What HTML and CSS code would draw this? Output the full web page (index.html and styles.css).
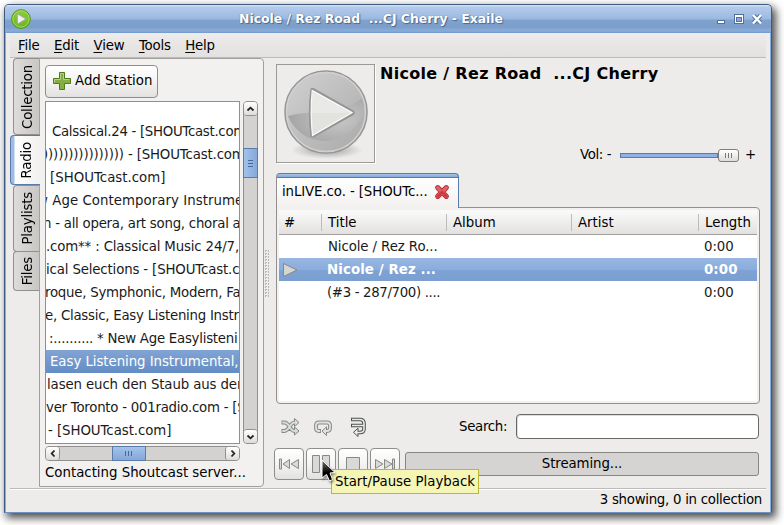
FILE: index.html
```html
<!DOCTYPE html>
<html lang="en">
<head>
<meta charset="utf-8">
<title>Exaile</title>
<link rel="stylesheet" href="styles.css">
</head>
<body>
<div class="window">
  <header class="titlebar">
    <svg class="app-icon" width="20" height="20" viewBox="0 0 20 20">
      <defs><linearGradient id="g" x1="0" y1="0" x2="0" y2="1"><stop offset="0" stop-color="#8fcf3c"/><stop offset="1" stop-color="#65b80f"/></linearGradient></defs>
      <circle cx="10" cy="10" r="9.3" fill="url(#g)" stroke="#4e8f10"/>
      <circle cx="10" cy="10" r="8.2" fill="none" stroke="#a5dc62"/>
      <path d="M6.3 4.600 L15.200 10 L6.300 15.200 Z" fill="#f2f2ee" stroke="#a3aaa0" stroke-width="1.200" stroke-linejoin="round"/>
    </svg>
    <h1 class="title">Nicole / Rez Road &nbsp;...CJ Cherry - Exaile</h1>
    <svg class="controls" width="50" height="16" viewBox="0 0 50 16">
      <rect x="2.500" y="9.500" width="7" height="3" fill="#fff" stroke="#50709f"/>
      <rect x="19.500" y="3.500" width="9" height="9" fill="#fff" stroke="#50709f"/>
      <rect x="21.500" y="6.500" width="5" height="4" fill="#88aadb" stroke="#50709f"/>
      <path d="M38.500 4.500 L45.500 12 M45.500 4.500 L38.500 12" stroke="#50709f" stroke-width="4.400"/>
      <path d="M38 4 L46 12.500 M46 4 L38 12.500" stroke="#fff" stroke-width="2.500"/>
    </svg>
  </header>
  <nav class="menu">
    <span><u>F</u>ile</span><span><u>E</u>dit</span><span><u>V</u>iew</span><span><u>T</u>ools</span><span><u>H</u>elp</span>
  </nav>
  <main class="content">
    <div class="side-tabs">
      <div class="side-tab collection"><span>Collection</span></div>
      <div class="side-tab radio"><span>Radio</span></div>
      <div class="side-tab playlists"><span>Playlists</span></div>
      <div class="side-tab files"><span>Files</span></div>
    </div>
    <section class="side-panel">
      <button class="add">
        <svg width="20" height="20" viewBox="0 0 20 20"><path d="M7.500 1.500h5v6h6v5h-6v6h-5v-6h-6v-5h6z" fill="#84ae43" stroke="#4c7d1d"/><path d="M8.500 2.500h3v6h6M2.500 11.500v-3h6v-6" fill="none" stroke="#b5d382"/></svg>
        <span>Add Station</span>
      </button>
      <div class="tree-grid">
        <ul class="tree">
          <li>Calssical.24 - [SHOUTcast.com</li>
          <li>)))))))))))))))) - [SHOUTcast.com</li>
          <li>[SHOUTcast.com]</li>
          <li>w Age Contemporary Instrume</li>
          <li>n - all opera, art song, choral a</li>
          <li>.com** : Classical Music 24/7,</li>
          <li>ical Selections - [SHOUTcast.c</li>
          <li>roque, Symphonic, Modern, Fa</li>
          <li>e, Classic, Easy Listening Instr</li>
          <li>:.......... * New Age Easylisteni</li>
          <li class="selected">Easy Listening Instrumental,</li>
          <li>lasen euch den Staub aus der</li>
          <li>ver Toronto - 001radio.com - [S</li>
          <li>- [SHOUTcast.com]</li>
        </ul>
        <div class="vscroll">
          <i class="cap"><svg width="9" height="6" viewBox="0 0 9 6"><path d="M1.500 4.500 4.500 1.700 7.500 4.500"/></svg></i>
          <i class="thumb"><svg width="7" height="8" viewBox="0 0 7 8"><path class="grip" d="M1 1.500h5M1 4.500h5M1 7.500h5"/></svg></i>
          <i class="cap"><svg width="9" height="6" viewBox="0 0 9 6"><path d="M1.500 1.500 4.500 4.300 7.500 1.500"/></svg></i>
        </div>
        <div class="hscroll">
          <i class="cap"><svg width="6" height="9" viewBox="0 0 6 9"><path d="M4.500 1.500 1.700 4.500 4.500 7.500"/></svg></i>
          <i class="thumb"><svg width="8" height="7" viewBox="0 0 8 7"><path class="grip" d="M.5 1v5M3.500 1v5M6.500 1v5"/></svg></i>
          <i class="cap"><svg width="6" height="9" viewBox="0 0 6 9"><path d="M1.500 1.500 4.300 4.500 1.500 7.500"/></svg></i>
        </div>
      </div>
      <div class="contact">Contacting Shoutcast server...</div>
    </section>
    <div class="splitter"><i></i></div>
    <section class="player">
      <div class="now">
        <div class="cover">
          <svg width="97" height="97" viewBox="0 0 97 97">
            <defs>
              <radialGradient id="sh"><stop offset="0" stop-color="#555" stop-opacity=".6"/><stop offset="1" stop-color="#777" stop-opacity="0"/></radialGradient>
              <linearGradient id="c" x1="0" y1="0" x2="1" y2="1"><stop offset="0" stop-color="#d2d2d2"/><stop offset="1" stop-color="#a9a9a9"/></linearGradient>
              <radialGradient id="d" cx=".65" cy=".5" r=".65"><stop offset="0" stop-color="#c9c9c9"/><stop offset="1" stop-color="#a4a4a4"/></radialGradient>
            </defs>
            <ellipse cx="50" cy="85" rx="36" ry="9" fill="url(#sh)"/>
            <circle cx="49" cy="47" r="41" fill="url(#c)" stroke="#959595" stroke-width="1.600"/>
            <path d="M11 51 Q21 48 33 48 Q70 46 87 32 A39.500 39.500 0 0 1 11 51Z" fill="url(#d)"/>
            <circle cx="49" cy="47" r="39.500" fill="none" stroke="#d0d0d0" stroke-width="1.500"/>
            <path d="M34.500 24.500 Q35 23.500 36.500 24.300 L76 46.500 Q77.500 47.700 76 49 L37 71 Q34.800 72 34.300 70 Q31.500 47 34.500 24.500Z" fill="#e9eae7" stroke="#959595" stroke-width="2.200"/>
            <path d="M35.200 25.500 L75 47.600 L35.500 70.500 Q33 47 35.200 25.500Z" fill="none" stroke="#fafafa" stroke-width="1.200"/>
            <path d="M35 48H73L36 69Z" fill="#e2e3df"/>
          </svg>
        </div>
        <div class="info">
          <h2>Nicole / Rez Road &nbsp;...CJ Cherry</h2>
          <div class="volume"><span class="vol">Vol: -</span><div class="track"></div><div class="knob"><svg width="8" height="5" viewBox="0 0 8 5"><path class="grip" d="M.5 0v5M3.500 0v5M6.500 0v5"/></svg></div><span class="plus">+</span></div>
        </div>
      </div>
      <div class="notebook">
        <div class="tab"><span>inLIVE.co. - [SHOUTc...</span>
          <svg width="16" height="16" viewBox="0 0 16 16"><path d="M3.700 3.700 12.300 12.300M12.300 3.700 3.700 12.300" stroke="#b82d33" stroke-width="5.200" stroke-linecap="round"/><path d="M3.700 3.700 12.300 12.300M12.300 3.700 3.700 12.300" stroke="#df6468" stroke-width="3.400" stroke-linecap="round"/><path d="M3.700 12.300 8 8 12.300 12.300" fill="none" stroke="#d0393f" stroke-width="2.500" stroke-linecap="round"/></svg>
        </div>
        <div class="page">
          <div class="thead"><span>#</span><span>Title</span><span>Album</span><span>Artist</span><span>Length</span></div>
          <div class="trow"><span></span><span>Nicole / Rez Ro...</span><span></span><span></span><span>0:00</span></div>
          <div class="trow playing"><span><svg width="16" height="16" viewBox="0 0 16 16"><path d="M1.500 1.500 15 8 1.500 14.500Z" fill="#d5d5d1" stroke="#85898b" stroke-linejoin="round"/></svg></span><span>Nicole / Rez ...</span><span></span><span></span><span>0:00</span></div>
          <div class="trow"><span></span><span class="tight">(#3 - 287/700) ....</span><span></span><span></span><span>0:00</span></div>
        </div>
      </div>
      <div class="search-row">
        <svg class="modes" width="90" height="20" viewBox="0 0 90 20" fill="none">
          <g stroke="#858985" stroke-width="3.800"><path d="M1.500 5.500h3q2.500 0 5 4.200t5 4.300h1.500M1.500 14h3q2.500 0 5-4.200t5-4.300h1.500"/></g>
          <path d="M14.500 1.500 19 5.500 14.500 9.500ZM14.500 10 19 14 14.500 18Z" fill="#d9dcd8" stroke="#858985"/>
          <g stroke="#d9dcd8" stroke-width="1.800"><path d="M2.300 5.500h2.200q2.500 0 5 4.200t5 4.300h1.500M2.300 14h2.200q2.500 0 5-4.200t5-4.300h1.500"/></g>
          <path d="M41 14h-2q-3 0-3-3v-2.500q0-3 3-3h8q3 0 3 3v2.500q0 3-3 3" stroke="#858985" stroke-width="3.800"/>
          <path d="M46.500 9.800v8.700l-4.500-4.400Z" fill="#e0e2df" stroke="#858985"/>
          <path d="M40.200 14h-1.200q-3 0-3-3v-2.500q0-3 3-3h8q3 0 3 3v2.500q0 3-3 3h-1" stroke="#e0e2df" stroke-width="1.800"/>
          <path d="M71 2.500h9q4 0 4 4v5.500q0 3.500-4 3.500h-3M71 8.500h12" stroke="#4e524e" stroke-width="3.600"/>
          <path d="M78 11.200v8.300l-4.500-4.200Z" fill="#eee" stroke="#4e524e"/>
          <path d="M72 2.500h8q4 0 4 4v5.500q0 3.500-4 3.500h-3M72 8.500h12" stroke="#e7e9e6" stroke-width="1.600"/>
        </svg>
        <label>Search:</label><div class="entry"></div>
      </div>
      <div class="playback">
        <button><svg width="22" height="20" viewBox="0 0 22 20"><path d="M1.500 5v10h2v-10ZM11.500 5.500v9L5 10ZM20.500 5.500v9L13 10Z"/></svg></button>
        <button><svg width="22" height="20" viewBox="0 0 22 20"><path d="M2.500 1.500h7v17h-7ZM12.500 1.500h7v17h-7Z"/></svg></button>
        <button><svg width="22" height="20" viewBox="0 0 22 20"><path d="M4.500 3.500h13v13h-13Z"/></svg></button>
        <button><svg width="22" height="20" viewBox="0 0 22 20"><path d="M1.500 5.500v9L9 10ZM10.500 5.500v9L18 10ZM18.500 5v10h2v-10Z"/></svg></button>
        <div class="progress">Streaming...</div>
      </div>
    </section>
  </main>
  <footer class="status">3 showing, 0 in collection</footer>
</div>
<div class="tooltip">Start/Pause Playback</div>
<svg class="cursor" width="17" height="26" viewBox="0 0 17 26"><defs><linearGradient id="k" x1="0" y1="0" x2="0" y2="1"><stop offset="0" stop-color="#777"/><stop offset=".6" stop-color="#000"/></linearGradient></defs><path d="M1 1V19L5.500 15.500 8.500 22 11.500 20.500 9 14 14 13.500Z" fill="url(#k)" stroke="#fff"/></svg>
</body>
</html>
```
FILE: styles.css
```css
* { box-sizing: border-box; }
body { margin: 0; width: 784px; height: 525px; overflow: hidden; background: #fff; padding: 4px 0 0 4px; position: relative; font: 13.33px/16px "DejaVu Sans", sans-serif; color: #000; }
h1, h2, ul { margin: 0; padding: 0; }
button { font: inherit; padding: 0; border: 1px solid #8e8e8b; border-radius: 4px; background: linear-gradient(#fff, #f4f4f3 50%, #e2e1df); color: #000; }
span, .tree li { white-space: pre; }
.window { width: 768px; height: 509px; background: #edecea; border: 1px solid #3c5a82; border-bottom-color: #6d93c5; border-radius: 5px 5px 0 0; box-shadow: inset 1px 0 #86aee0, inset -1px 0 #86aee0, 3px 4px 8px 1px rgba(0,0,0,.7); display: flex; flex-direction: column; }
.titlebar { height: 28px; flex: none; border-radius: 4px 4px 0 0; background: linear-gradient(#dce8f7 0, #b5cbe9 2px, #9ab9e0 14px, #7fa2cf 15px, #7b9eca 22px, #8badd9 26px, #6f98cc 28px); display: flex; align-items: center; padding-left: 6px; }
.title { flex: 1; text-align: center; font-size: 12.4px; color: #fff; text-shadow: 0 0 1px #49678f, 1px 1px 1px #49678f; padding-right: 8px; white-space: nowrap; }
.controls { margin: 0 6px 0 -4px; flex: none; }
.menu { height: 25px; flex: none; margin: 0 5px; border-bottom: 1px solid #bdbcba; background: linear-gradient(#edecea, #e2e1df); display: flex; padding: 5px 0 0 8px; letter-spacing: -.2px; }
.menu span { margin-right: 14.5px; }
.menu u { text-underline-offset: 2px; }
.content { height: 430px; flex: none; display: flex; padding-left: 5px; }
.side-tabs { width: 30px; display: flex; flex-direction: column; position: relative; z-index: 1; }
.side-tab { width: 27px; margin-left: 3px; border: 1px solid #91908e; border-right-color: #a4a3a0; border-radius: 4px 0 0 4px; background: linear-gradient(90deg, #dddcda, #c8c7c4); display: flex; align-items: center; justify-content: center; }
.side-tab span { writing-mode: vertical-rl; transform: rotate(180deg); margin-left: 3px; letter-spacing: -.2px; }
.collection { height: 77px; }
.radio { height: 50px; width: 30px; margin-left: 0; border-color: #5b7cab; border-right: 0; background: linear-gradient(90deg, #9dbde6 0 3px, #fff 4px, #f2f1f0 28px); }
.playlists { height: 67px; }
.files { height: 40px; margin-top: -1px; }
.side-panel { width: 225px; margin-left: -1px; height: 429px; border: 1px solid #a09f9c; border-radius: 0 4px 4px 0; background: #f2f1f0; padding: 6px 0 0 5px; }
.add { display: flex; align-items: center; width: 113px; height: 33px; padding-left: 6px; }
.add span { margin: -2px 0 0 3px; }
.add svg { flex: none; margin-top: -2px; }
.tree-grid { margin-top: 3px; display: grid; grid-template: 343px 16px / 195px 15px; gap: 2px 3px; }
.tree { list-style: none; border: 1px solid #91908e; background: #fff; overflow: hidden; padding-top: 18px; }
.tree li { height: 23px; line-height: 23px; padding-left: 6px; color: #1a1a1a; letter-spacing: -.25px; }
.tree li:nth-child(1) { letter-spacing: -.3px; }
.tree li:nth-child(2) { text-indent: -9px; letter-spacing: -.15px; }
.tree li:nth-child(3) { padding-left: 4px; letter-spacing: 0; }
.tree li:nth-child(4) { text-indent: -15px; letter-spacing: .05px; }
.tree li:nth-child(5) { text-indent: -9px; }
.tree li:nth-child(6), .tree li:nth-child(7) { text-indent: -6px; letter-spacing: -.15px; }
.tree li:nth-child(8), .tree li:nth-child(9) { text-indent: -7px; }
.tree li:nth-child(10) { padding-left: 3px; }
.tree li.selected { padding-left: 4px; letter-spacing: -.05px; color: #fff; background: linear-gradient(#81a4d3, #648dc4); }
.tree li:nth-child(12) { text-indent: -5px; letter-spacing: -.12px; }
.tree li:nth-child(13) { text-indent: -6px; }
.tree li:nth-child(14) { padding-left: 2px; letter-spacing: -.06px; }
.vscroll, .hscroll { background: #d3d2d0; border: 1px solid #91908e; border-radius: 4px; display: flex; }
.vscroll { flex-direction: column; }
.hscroll { height: 15px; }
.cap, .thumb { display: flex; align-items: center; justify-content: center; background: linear-gradient(#fff, #dddcda); border: 0 solid #91908e; flex: none; width: 14px; height: 14px; border-radius: 3px; }
.vscroll .cap { width: 13px; }
.hscroll .cap { height: 13px; }
.vscroll .cap:first-child { border-bottom-width: 1px; margin-bottom: 32px; }
.vscroll .cap:last-child { border-top-width: 1px; margin-top: auto; }
.hscroll .cap:first-child { border-right-width: 1px; margin-right: 52px; }
.hscroll .cap:last-child { border-left-width: 1px; margin-left: auto; }
.cap path { fill: none; stroke: #222; stroke-width: 1.8; }
.thumb { border: 1px solid #5b7cab; border-radius: 0; background: linear-gradient(90deg, #a4c2ea, #83a8da); }
.vscroll .thumb { width: 15px; height: 30px; margin: 0 -1px; }
.hscroll .thumb { width: 34px; height: 15px; margin: -1px 0 0; background: linear-gradient(#a4c2ea, #83a8da); }
.grip { fill: none; stroke: #466a9d; }
.contact { margin-top: 3px; white-space: nowrap; }
.splitter { width: 12px; display: flex; align-items: center; }
.splitter i { width: 5px; height: 47px; background: conic-gradient(#b9b8b6 25%, transparent 0) 0 0 / 3px 3px; }
.player { width: 486px; display: flex; flex-direction: column; }
.now { height: 115px; display: flex; padding-top: 6px; flex: none; }
.cover { width: 99px; height: 99px; border: 1px solid #9b9a97; flex: none; box-shadow: 1px 1px #fff; }
.cover svg { display: block; }
.info { flex: 1; padding-left: 5px; }
h2 { font: bold 16px/18px "DejaVu Sans", sans-serif; letter-spacing: .3px; white-space: nowrap; padding-top: 1px; }
.volume { display: flex; align-items: center; margin: 64px 0 0 200px; }
.vol { width: 40px; letter-spacing: -.4px; }
.track { width: 98px; height: 5px; border: 1px solid #5b7cab; background: #8fb2e2; }
.knob { width: 21px; height: 13px; border: 1px solid #7f7e7b; border-radius: 3px; background: linear-gradient(#fff, #dddcda); display: flex; align-items: center; justify-content: center; }
.knob .grip { stroke: #777; }
.plus { margin-left: 6px; }
.notebook { height: 231px; flex: none; display: flex; flex-direction: column; }
.tab { width: 183px; height: 35px; border: 1px solid #5b7cab; border-bottom: 0; border-left-color: #91908e; border-radius: 4px 4px 0 0; background: linear-gradient(#a9c5ea 0, #83a8da 3px, #5b7cab 3px, #5b7cab 4px, #fff 4px, #f2f1f0 34px); padding: 1px 8px 0 5px; display: flex; align-items: center; justify-content: space-between; position: relative; letter-spacing: -.1px; }
.page { width: 484px; height: 197px; margin-top: -1px; border: 1px solid #91908e; border-radius: 0 4px 4px 4px; background: #fff; padding: 2px 2px 0; box-shadow: inset 0 0 0 2px #f2f1f0; }
.thead, .trow { display: grid; grid-template-columns: 42px 125px 125px 127px 1fr; height: 23px; align-items: center; }
.thead { height: 25px; background: linear-gradient(#fbfbfb, #e2e1df); border-bottom: 1px solid #a09f9c; }
.thead span { padding: 1px 0 0 6px; border-left: 1px solid #bdbcba; }
.thead span:first-child { border: 0; padding-left: 5px; }
.thead { padding-top: 1px; }
.trow span { padding-left: 7px; color: #1a1a1a; letter-spacing: -.1px; }
.trow span.tight { letter-spacing: -.35px; padding-left: 6px; }
.trow span:first-child { padding-left: 3px; }
.trow span:last-child { padding-left: 6px; }
.trow svg { display: block; }
.trow.playing { background: linear-gradient(#98b6e1, #8aadde 50%, #7da2d3 52%, #7a9fd0); font-weight: bold; }
.trow.playing span { color: #fff; padding-left: 6px; letter-spacing: .1px; }
.trow.playing span:first-child { padding-left: 3px; }
.search-row { height: 44px; display: flex; align-items: center; flex: none; padding-top: 1px; }
.modes { margin-left: 4px; }
.search-row label { margin-left: 89px; width: 57px; letter-spacing: -.3px; }
.entry { width: 243px; height: 25px; border: 1px solid #686866; border-radius: 4px; background: #fff; box-shadow: inset 1px 1px #ddd; }
.playback { display: flex; gap: 2px; margin-left: -2px; align-items: center; height: 32px; }
.playback button { width: 30px; height: 32px; display: flex; align-items: center; justify-content: center; }
.playback button path { fill: #d9dad7; stroke: #868985; }
.progress { margin-left: 3px; width: 354px; height: 24px; border: 1px solid #858582; border-radius: 3px; background: #d5d4d2; text-align: center; line-height: 21px; letter-spacing: -.1px; }
.status { height: 24px; margin: 0 5px; border-top: 1px solid #bdbcba; box-shadow: inset 0 1px #fff; text-align: right; padding: 3px 4px 0 0; letter-spacing: -.27px; }
.tooltip { position: absolute; left: 331px; top: 469px; width: 148px; height: 25px; border: 1px solid #bcb833; background: #f5f5b5; padding: 4px 3px; white-space: nowrap; }
.cursor { position: absolute; left: 321px; top: 459px; filter: drop-shadow(1px 2px 1px rgba(0,0,0,.4)); }
```
